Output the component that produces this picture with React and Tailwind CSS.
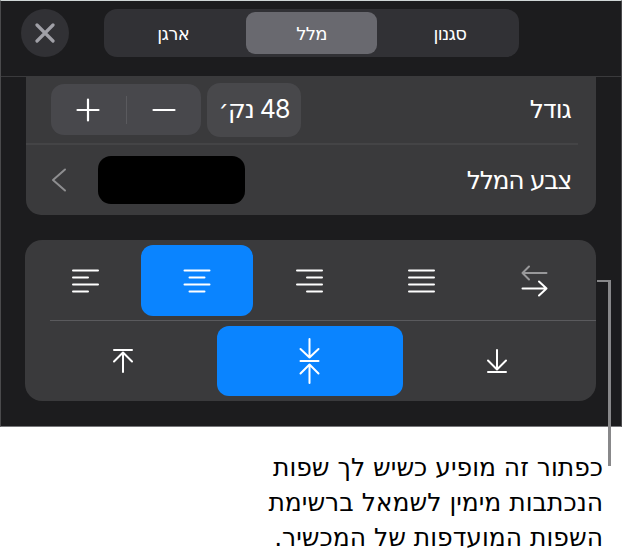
import React from 'react';
import clsx from 'clsx';

const TABS = [
  { id: 'style',   label: 'סגנון' },
  { id: 'text',    label: 'מלל' },
  { id: 'arrange', label: 'ארגן' },
];

function Icon({ w, h, sw = 2, children }) {
  return (
    <svg
      width={w}
      height={h}
      viewBox={`0 0 ${w} ${h}`}
      fill="none"
      stroke="currentColor"
      strokeWidth={sw}
      strokeLinecap="round"
      strokeLinejoin="round"
    >
      {children}
    </svg>
  );
}

const H_ALIGN = [
  {
    id: 'direction',
    icon: (
      <Icon w={28} h={34}>
        <path d="M26.5 9H2.5M9 2.5L2.5 9L9 15.5" stroke="#98989a" />
        <path d="M2.5 24.5H26.5M19 17.5L26.5 24.5L19 31.5" />
      </Icon>
    ),
  },
  { id: 'justify', icon: <Icon w={28} h={24}><path d="M1 1.5H26M1 8.5H26M1 15.5H26M1 22.5H26" /></Icon> },
  { id: 'right',   icon: <Icon w={28} h={24}><path d="M1 1.5H26M11 8.5H26M1 15.5H26M11 22.5H26" /></Icon> },
  { id: 'center',  icon: <Icon w={28} h={24}><path d="M1.5 1.5H26.5M6.5 8.5H21.5M1.5 15.5H26.5M6.5 22.5H21.5" /></Icon> },
  { id: 'left',    icon: <Icon w={28} h={24}><path d="M2 1.5H27M2 8.5H17M2 15.5H27M2 22.5H17" /></Icon> },
];

const V_ALIGN = [
  { id: 'bottom', icon: <Icon w={22} h={26}><path d="M11 2V20.5M2 12.5L11 21.5L20 12.5M2 24H20" /></Icon> },
  {
    id: 'middle',
    icon: (
      <Icon w={22} h={48}>
        <path d="M10.5 2V20.5M1.5 12L10.5 20.5L19.5 12M1.5 24H19.5M10.5 27.5V46M1.5 36.5L10.5 27.5L19.5 36.5" />
      </Icon>
    ),
  },
  { id: 'top', icon: <Icon w={22} h={26}><path d="M11 24V5M2 13.5L11 4.5L20 13.5M2 2H20" /></Icon> },
];

function AlignRow({ items, value, className }) {
  return (
    <div className={clsx('flex pr-[6px] text-white', className)}>
      {items.map((item) => (
        <button
          key={item.id}
          className={clsx(
            'flex-1 h-full rounded-[12px] flex items-center justify-center',
            value === item.id && 'bg-[#0a84ff]'
          )}
        >
          {item.icon}
        </button>
      ))}
    </div>
  );
}

export default function App() {
  return (
    <div
      dir="rtl"
      className="relative w-[622px] h-[553px] bg-white overflow-hidden font-['DejaVu_Sans',sans-serif]"
    >
      <div className="h-[427px] bg-[#1c1c1e] border border-t-[#cfd6d6] border-x-[#4a4a4c] border-b-[#77777a]">
        {/* Header */}
        <div dir="ltr" className="h-[76px] flex items-start pt-2 pl-5 border-b border-[#3a3a3c]">
          <button className="size-12 rounded-full bg-[#313135] flex items-center justify-center text-[#a0a0a7]">
            <Icon w={20} h={20} sw={3.2}>
              <path d="M2 2L18 18M18 2L2 18" />
            </Icon>
          </button>
          <div dir="rtl" className="ml-[35px] w-[415px] h-12 rounded-[13px] bg-[#313135] flex py-[3px]">
            {TABS.map((tab) => (
              <button key={tab.id} className="flex-1 px-[4px]">
                <span
                  className={clsx(
                    'h-[42px] rounded-[9px] flex items-center justify-center text-[18px] tracking-[-0.7px] text-white pt-px',
                    tab.id === 'text' && 'bg-[#69696f]'
                  )}
                >
                  {tab.label}
                </span>
              </button>
            ))}
          </div>
        </div>

        {/* Text size and colour */}
        <div className="mx-[25px] h-[138px] rounded-b-[15px] bg-[#3a3a3c] text-white text-[25px] tracking-[-1.3px]">
          <div className="h-[66px] flex items-center px-[25px]">
            <span className="tracking-[-0.9px]">גודל</span>
            <div className="flex-1" />
            <span className="w-[94px] h-[54px] rounded-[13px] bg-[#48484b] flex items-center justify-center tracking-[-1px] font-[Inter,'DejaVu_Sans',sans-serif]">
              48 נק׳
            </span>
            <div dir="ltr" className="mr-[6px] mb-px w-[150px] h-[51px] rounded-[13px] bg-[#48484c] flex items-center">
              <button className="flex-1 flex justify-center">
                <Icon w={24} h={24} sw={2.2}><path d="M12 1.5V22.5M1.5 12H22.5" /></Icon>
              </button>
              <div className="w-px h-7 bg-[#5a5a5e]" />
              <button className="flex-1 flex justify-center">
                <Icon w={24} h={24} sw={2.2}><path d="M1.5 12H22.5" /></Icon>
              </button>
            </div>
          </div>
          <div className="mr-[18px] h-[2px] bg-[#444446]" />
          <div className="h-[70px] flex items-center px-[25px]">
            <span className="pt-px">צבע המלל</span>
            <div className="flex-1" />
            <div className="w-[147px] h-[48px] rounded-[13px] bg-black" />
            <div className="mr-[31px] text-[#8e8e90]">
              <Icon w={16} h={24}><path d="M14 1.5L2 12L14 22.5" /></Icon>
            </div>
          </div>
        </div>

        {/* Alignment */}
        <div className="mt-[25px] mr-[25px] ml-6 h-[161px] rounded-[17px] bg-[#3a3a3c] pt-[5px]">
          <AlignRow items={H_ALIGN} value="center" className="h-[71px] pl-1" />
          <div className="mt-1 ml-[25px] h-px bg-[#5a5a5d]" />
          <AlignRow items={V_ALIGN} value="middle" className="mt-[5px] h-[70px] pl-[5px]" />
        </div>
      </div>

      <p className="mt-[23px] mr-[19px] text-[25px] leading-[35px] text-black whitespace-nowrap">
        כפתור זה מופיע כשיש לך שפות
        <br />
        הנכתבות מימין לשמאל ברשימת
        <br />
        השפות המועדפות של המכשיר.
      </p>

      {/* Callout line */}
      <div className="absolute left-[597px] top-[280px] w-[14px] h-[186px] border-t-[2px] border-r-[3px] border-[#88888a]" />
    </div>
  );
}
